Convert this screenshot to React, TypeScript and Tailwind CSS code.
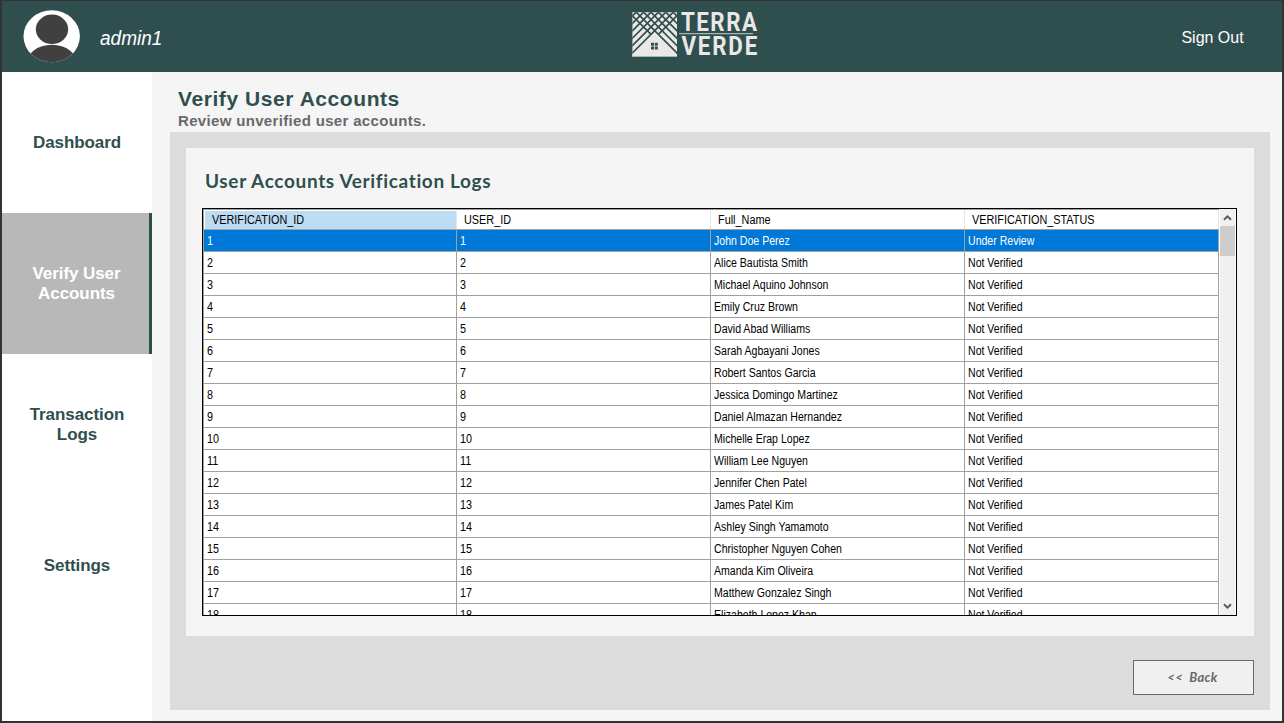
const names = [
  'John Doe Perez', 'Alice Bautista Smith', 'Michael Aquino Johnson', 'Emily Cruz Brown',
  'David Abad Williams', 'Sarah Agbayani Jones', 'Robert Santos Garcia', 'Jessica Domingo Martinez',
  'Daniel Almazan Hernandez', 'Michelle Erap Lopez', 'William Lee Nguyen', 'Jennifer Chen Patel',
  'James Patel Kim', 'Ashley Singh Yamamoto', 'Christopher Nguyen Cohen', 'Amanda Kim Oliveira',
  'Matthew Gonzalez Singh', 'Elizabeth Lopez Khan',
];

const columns = ['VERIFICATION_ID', 'USER_ID', 'Full_Name', 'VERIFICATION_STATUS'];

function Avatar() {
  return (
    <svg className="ml-[21px] h-[54px] w-[58px] shrink-0" viewBox="0 0 58 54">
      <defs>
        <clipPath id="avatar"><ellipse cx="28.7" cy="26.3" rx="28.2" ry="26" /></clipPath>
      </defs>
      <ellipse cx="28.7" cy="26.3" rx="28.2" ry="26" fill="#fff" />
      <ellipse cx="29" cy="19.3" rx="16.2" ry="14.7" fill="#404040" />
      <ellipse cx="28.8" cy="55" rx="26" ry="20.3" fill="#404040" clipPath="url(#avatar)" />
    </svg>
  );
}

function Logo() {
  return (
    <svg className="mt-[9px] h-[50px] w-[130px] self-start" viewBox="0 0 130 50">
      <defs>
        <clipPath id="tile"><rect x="2.4" y="2.3" width="44.6" height="44.7" /></clipPath>
        <path id="weave" d="M-2 40 L40 -2 M-2 32.6 L32.6 -2 M-2 25.2 L25.2 -2 M-2 17.8 L17.8 -2 M-2 10.4 L10.4 -2 M24.7 20.7 L48 -2.6 M28.4 24.4 L54.8 -2" />
      </defs>
      <g clipPath="url(#tile)">
        <rect x="2" y="2" width="46" height="46" fill="#ebe7e6" />
        <g stroke="#2f4f4f" strokeWidth="1.7" fill="none">
          <use href="#weave" />
          <use href="#weave" transform="matrix(-1 0 0 1 49.4 0)" />
        </g>
        <path d="M24.7 20.7 L0 45.4 V48 H50 V46 Z" fill="#ebe7e6" />
        <path d="M0 45.4 L24.7 20.7 L49.4 45.4" fill="none" stroke="#2f4f4f" strokeWidth="1.7" />
        <path d="M2 46.5H48" stroke="#a6b4b3" />
      </g>
      <path d="M21 32.8h3v3h-3zM24.8 32.8h3v3h-3zM21 36.6h3v3h-3zM24.8 36.6h3v3h-3z" fill="#2f4f4f" />
      <path d="M49 23.6H123" stroke="#a6b4b3" strokeWidth="1.3" />
      <g fill="#ebe7e6" fontFamily="Roboto, sans-serif" fontWeight="700" fontSize="26" transform="scale(0.86 1)">
        <text x="59.2" y="20.9" textLength="88.5">TERRA</text>
        <text x="59.8" y="44.7" textLength="88.2">VERDE</text>
      </g>
    </svg>
  );
}

function NavItem({ lines, active = false }: { lines: string[]; active?: boolean }) {
  return (
    <button
      className={`flex h-[141px] w-full flex-col items-center justify-center text-[17px] leading-5 font-bold tracking-[-0.08px] ${
        active ? 'border-r-[3px] border-[#2f4f4f] bg-[#b8b8b8] pl-[2px] text-white' : 'text-[#2f4f4f]'
      }`}
    >
      {lines.map((line) => <span key={line}>{line}</span>)}
    </button>
  );
}

function Arrow({ down = false }: { down?: boolean }) {
  return (
    <svg className={`h-[17px] w-[15px] ${down ? 'rotate-180' : ''}`} viewBox="0 0 15 17">
      <path d="M4 10.8 L7.5 7.3 L11 10.8" fill="none" stroke="#5a5a5a" strokeWidth="2" />
    </svg>
  );
}

const grid = 'grid grid-cols-[253px_254px_254px_254px]';

function AccountsTable() {
  return (
    <div className="flex h-[408px] w-[1035px] border border-black bg-white text-[12px] text-black">
      <div className="h-full w-[1016px] overflow-hidden border-t border-l border-[#a0a0a0]">
        <div className={`${grid} h-5 grid-rows-[19px] border-b border-[#a0a0a0] leading-4`}>
          {columns.map((column, i) => (
            <div key={column} className={`flex items-center border-r border-[#e5e5e5] pl-[7px] ${i === 0 ? 'mt-px ml-px bg-[#bcdcf4] pb-px' : ''}`}>
              <span className="origin-left scale-x-[0.905] whitespace-nowrap">{column}</span>
            </div>
          ))}
        </div>
        {names.map((name, i) => (
          <div key={name} className={`${grid} h-[22px] border-b border-[#a0a0a0] ${i === 0 ? 'bg-[#0078d7] text-white' : ''}`}>
            {[String(i + 1), String(i + 1), name, i === 0 ? 'Under Review' : 'Not Verified'].map((value, c) => (
              <div key={c} className="flex items-center border-r border-[#a0a0a0] pl-[3px]">
                <span className={`origin-left whitespace-nowrap ${c < 2 ? 'scale-x-[0.9]' : 'scale-x-[0.88]'}`}>{value}</span>
              </div>
            ))}
          </div>
        ))}
      </div>
      <div className="ml-px flex w-[15px] flex-col bg-[#f0f0f0]">
        <Arrow />
        <div className="h-[30px] bg-[#cdcdcd]" />
        <div className="grow" />
        <Arrow down />
      </div>
    </div>
  );
}

export default function App() {
  return (
    <div className="flex h-[723px] w-[1284px] flex-col overflow-hidden border-x-2 border-t border-b-2 border-[#333333] bg-[#f5f5f5] font-['Liberation_Sans',sans-serif]">
      <header className="grid h-[71px] shrink-0 grid-cols-[628px_1fr_auto] items-center bg-[#2f4f4f] text-white">
        <div className="flex items-center">
          <Avatar />
          <span className="ml-[19px] origin-left scale-x-[0.95] pt-[2px] text-[20px] italic">admin1</span>
        </div>
        <Logo />
        <button className="origin-right scale-x-[0.94] pt-[2px] pr-[41px] text-[17px]">Sign Out</button>
      </header>
      <div className="flex min-h-0 grow">
        <nav className="w-[150px] shrink-0 bg-white">
          <NavItem lines={['Dashboard']} />
          <NavItem lines={['Verify User', 'Accounts']} active />
          <NavItem lines={['Transaction', 'Logs']} />
          <NavItem lines={['Settings']} />
        </nav>
        <main className="flex grow flex-col pl-[18px]">
          <div className="h-[60px] pt-[14px] pl-2 font-bold">
            <h1 className="text-[21px] leading-[26px] tracking-[0.57px] text-[#2f4f4f]">Verify User Accounts</h1>
            <p className="text-[15px] leading-[18px] tracking-[0.33px] text-[#696969]">Review unverified user accounts.</p>
          </div>
          <section className="h-[578px] w-[1100px] bg-[#dcdcdc] p-4">
            <div className="h-[488px] bg-[#f5f5f5] px-4">
              <h2 className="flex h-[60px] items-center pt-[6px] pl-[3px] font-['Century_Gothic','URW_Gothic',Lato,sans-serif] text-[19px] font-bold tracking-[0.65px] text-[#2f4f4f]">
                <span>User Accounts Verification Logs</span>
              </h2>
              <AccountsTable />
            </div>
            <div className="mt-6 flex justify-end">
              <button className="h-[35px] w-[121px] border border-[#696969] bg-[#f0f0f0] pr-[2px] font-['Century_Gothic','URW_Gothic',Lato,sans-serif] text-[13px] font-bold tracking-[0.3px] text-[#696969] italic">
                &lt;&lt; &nbsp;Back
              </button>
            </div>
          </section>
        </main>
      </div>
    </div>
  );
}
